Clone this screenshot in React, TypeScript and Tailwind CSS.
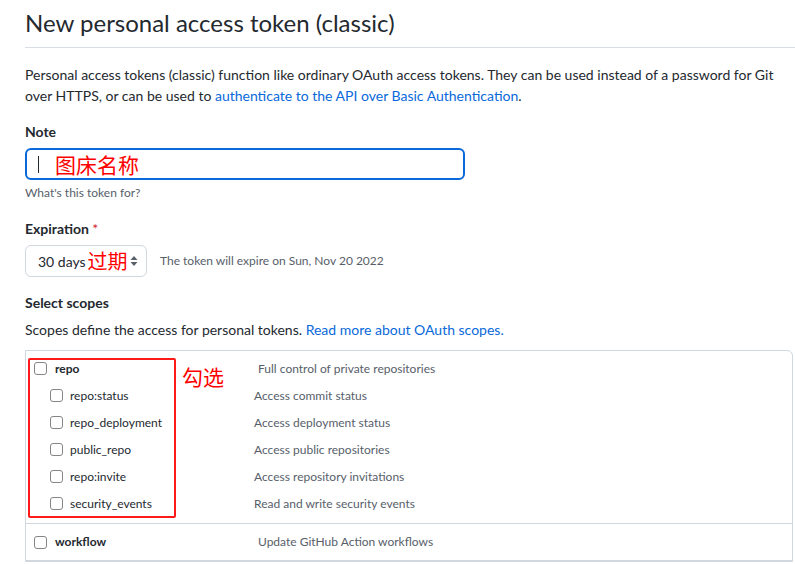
const font = { fontFamily: 'Lato, "Noto Sans CJK SC", sans-serif' };
const cjk = { fontFamily: '"Noto Sans CJK SC", sans-serif' };

const subScopes = [
  { name: "repo:status", desc: "Access commit status" },
  { name: "repo_deployment", desc: "Access deployment status" },
  { name: "public_repo", desc: "Access public repositories" },
  { name: "repo:invite", desc: "Access repository invitations" },
  { name: "security_events", desc: "Read and write security events" },
];

function Box() {
  return <span className="block w-[13px] h-[13px] shrink-0 rounded-[3px] border border-[#858585] bg-white" />;
}

export default function App() {
  return (
    <div
      className="w-[795px] h-[564px] overflow-hidden bg-white text-[#24292f] pl-[25px] pr-[2px]"
      style={font}
    >
      {/* Heading */}
      <h1 className="text-[24px] leading-[36px] pt-[5px] pb-[6px] font-normal border-b border-[#d8dee4] -mr-[2px]">
        New personal access token (classic)
      </h1>

      <p className="mt-[16px] text-[14px] leading-[21px] pr-[10px]">
        Personal access tokens (classic) function like ordinary OAuth access tokens. They can be used instead of a password for Git over HTTPS, or can be used to{" "}
        <a className="text-[#0969da]">authenticate to the API over Basic Authentication</a>.
      </p>

      {/* Note */}
      <div className="mt-[15px] text-[14px] leading-[21px] font-bold">Note</div>
      <div className="mt-[6px] w-[440px] h-[32px] rounded-[6px] border-2 border-[#0969da] flex items-center pl-[11px]">
        <span className="w-px h-[17px] bg-[#24292f]" />
        <span className="ml-[16px] text-[21px] leading-none text-[#ff0000]" style={cjk}>
          图床名称
        </span>
      </div>
      <div className="mt-[5px] text-[12px] leading-[16px] text-[#57606a]">What's this token for?</div>

      {/* Expiration */}
      <div className="mt-[17px] text-[14px] leading-[21px] font-bold">
        Expiration <span className="text-[#cf222e] font-normal">*</span>
      </div>
      <div className="mt-[6px] flex items-center">
        <div className="w-[122px] h-[32px] rounded-[6px] border border-[#d0d7de] bg-white flex items-center pl-[12px] pr-[8px]">
          <span className="text-[14px]">30 days</span>
          <span className="ml-[2px] text-[20px] leading-none text-[#ff0000]" style={cjk}>
            过期
          </span>
          <svg className="ml-auto" width="8" height="12" viewBox="0 0 8 12">
            <path d="M4 1 L7.5 5 H0.5 Z M4 11 L7.5 7 H0.5 Z" fill="#57606a" />
          </svg>
        </div>
        <span className="ml-[13px] text-[12px] text-[#57606a]">The token will expire on Sun, Nov 20 2022</span>
      </div>

      {/* Scopes */}
      <div className="mt-[15px] text-[14px] leading-[21px] font-bold">Select scopes</div>
      <p className="mt-[6px] text-[14px] leading-[21px]">
        Scopes define the access for personal tokens. <a className="text-[#0969da]">Read more about OAuth scopes.</a>
      </p>

      <div className="relative mt-[10px] border border-[#d0d7de] rounded-tr-[6px] text-[12px]">
        <div className="pt-[4px] pb-[6px]">
          <div className="h-[27px] flex items-center pl-[8px]">
            <Box />
            <span className="ml-[8px] w-[203px] font-bold">repo</span>
            <span className="text-[#57606a]">Full control of private repositories</span>
          </div>
          {subScopes.map((s) => (
            <div key={s.name} className="h-[27px] flex items-center pl-[24px]">
              <Box />
              <span className="ml-[7px] w-[184px]">{s.name}</span>
              <span className="text-[#57606a]">{s.desc}</span>
            </div>
          ))}
        </div>
        <div className="h-[38px] border-t border-b border-[#d0d7de] flex items-center pl-[8px]">
          <Box />
          <span className="ml-[8px] w-[203px] font-bold">workflow</span>
          <span className="text-[#57606a]">Update GitHub Action workflows</span>
        </div>

        {/* annotation */}
        <div className="absolute left-[2px] top-[7px] w-[148px] h-[160px] border-2 border-[#ff1a1a] rounded-[2px]" />
        <span className="absolute left-[156px] top-[15px] text-[21px] leading-none text-[#ff0000]" style={cjk}>
          勾选
        </span>
      </div>
    </div>
  );
}
